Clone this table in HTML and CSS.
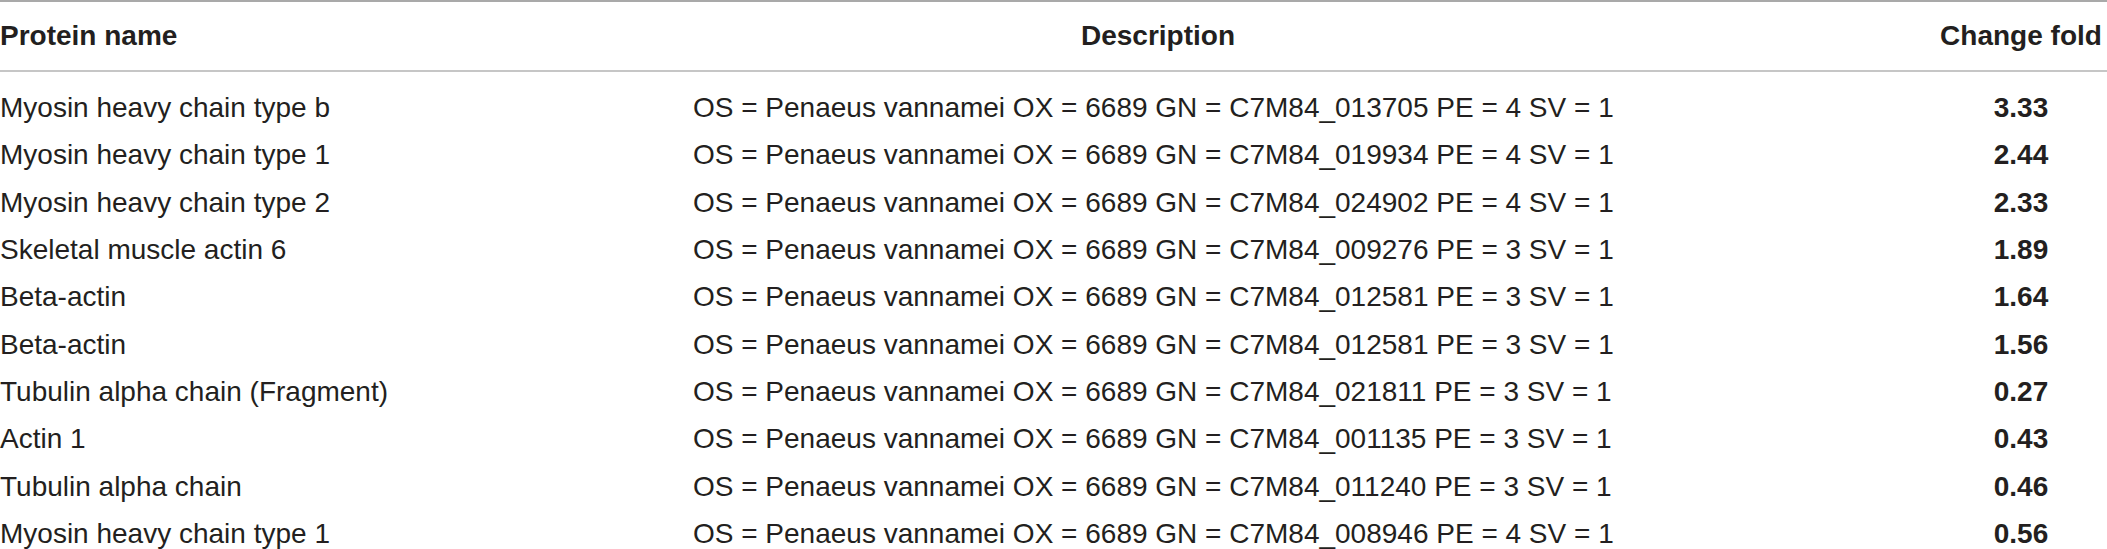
FILE: index.html
```html
<!DOCTYPE html>
<html lang="en">
<head>
<meta charset="utf-8">
<title>Proteins</title>
<link rel="stylesheet" href="styles.css">
</head>
<body>
<table class="data">
  <colgroup>
    <col class="c-name">
    <col class="c-desc">
    <col class="c-fold">
  </colgroup>
  <thead>
    <tr>
      <th class="name">Protein name</th>
      <th class="desc">Description</th>
      <th class="fold">Change fold</th>
    </tr>
  </thead>
  <tbody>
    <tr><td class="name">Myosin heavy chain type b</td><td class="desc">OS = Penaeus vannamei OX = 6689 GN = C7M84_013705 PE = 4 SV = 1</td><td class="fold">3.33</td></tr>
    <tr><td class="name">Myosin heavy chain type 1</td><td class="desc">OS = Penaeus vannamei OX = 6689 GN = C7M84_019934 PE = 4 SV = 1</td><td class="fold">2.44</td></tr>
    <tr><td class="name">Myosin heavy chain type 2</td><td class="desc">OS = Penaeus vannamei OX = 6689 GN = C7M84_024902 PE = 4 SV = 1</td><td class="fold">2.33</td></tr>
    <tr><td class="name">Skeletal muscle actin 6</td><td class="desc">OS = Penaeus vannamei OX = 6689 GN = C7M84_009276 PE = 3 SV = 1</td><td class="fold">1.89</td></tr>
    <tr><td class="name">Beta-actin</td><td class="desc">OS = Penaeus vannamei OX = 6689 GN = C7M84_012581 PE = 3 SV = 1</td><td class="fold">1.64</td></tr>
    <tr><td class="name">Beta-actin</td><td class="desc">OS = Penaeus vannamei OX = 6689 GN = C7M84_012581 PE = 3 SV = 1</td><td class="fold">1.56</td></tr>
    <tr><td class="name">Tubulin alpha chain (Fragment)</td><td class="desc">OS = Penaeus vannamei OX = 6689 GN = C7M84_021811 PE = 3 SV = 1</td><td class="fold">0.27</td></tr>
    <tr><td class="name">Actin 1</td><td class="desc">OS = Penaeus vannamei OX = 6689 GN = C7M84_001135 PE = 3 SV = 1</td><td class="fold">0.43</td></tr>
    <tr><td class="name">Tubulin alpha chain</td><td class="desc">OS = Penaeus vannamei OX = 6689 GN = C7M84_011240 PE = 3 SV = 1</td><td class="fold">0.46</td></tr>
    <tr><td class="name">Myosin heavy chain type 1</td><td class="desc">OS = Penaeus vannamei OX = 6689 GN = C7M84_008946 PE = 4 SV = 1</td><td class="fold">0.56</td></tr>
  </tbody>
</table>
</body>
</html>
```

FILE: styles.css
```css
html, body {
  margin: 0;
  padding: 0;
  background: #ffffff;
}

body {
  font-family: "Liberation Sans", Arial, sans-serif;
  color: #231f20;
  overflow: hidden;
}

.data {
  width: 2107px;
  border-collapse: collapse;
  table-layout: fixed;
  font-size: 28px;
}

.c-name { width: 381px; }
.c-desc { width: 1554px; }
.c-fold { width: 172px; }

.data th,
.data td {
  padding: 0;
  white-space: nowrap;
}

.data thead th {
  height: 68px;
  line-height: 68px;
  font-weight: bold;
  border-top: 2px solid #a9a9a9;
  border-bottom: 2px solid #c6c6c6;
}

.data tbody td {
  line-height: 47.33px;
}

.data tbody tr:first-child td {
  padding-top: 12px;
}

.name {
  text-align: left;
  padding-left: 1px;
}

.data th.desc {
  text-align: center;
}

.data td.desc {
  text-align: left;
  padding-left: 312px;
}

.fold {
  text-align: center;
}

.data td.fold {
  font-weight: bold;
}
```
